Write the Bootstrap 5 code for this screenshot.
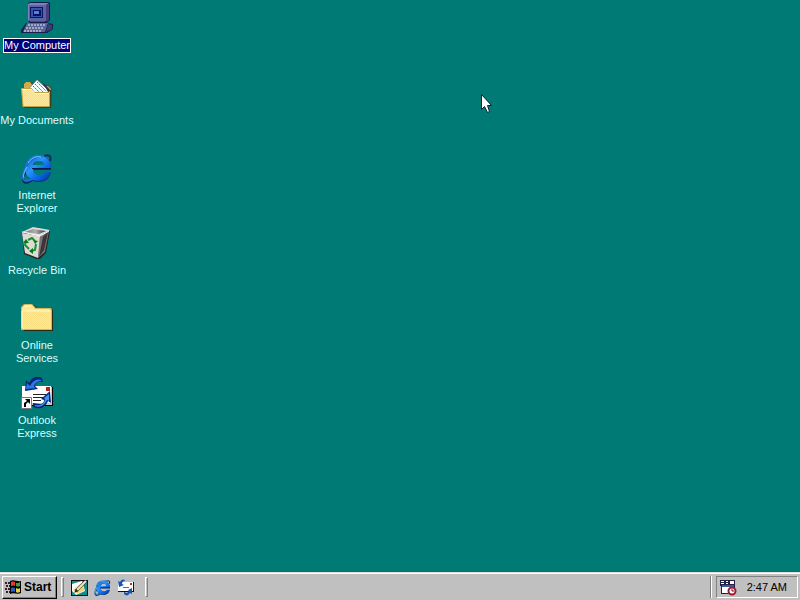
<!DOCTYPE html>
<html lang="en">
<head>
<meta charset="utf-8">
<meta name="viewport" content="width=device-width, initial-scale=1">
<title>Desktop</title>
<link href="https://cdn.jsdelivr.net/npm/bootstrap@5.3.0/dist/css/bootstrap.min.css" rel="stylesheet">
<style>
body { background: #007a75; font-family: "Liberation Sans", Arial, sans-serif; font-size: 11px; line-height: 13px; color: #000; }
svg { display: block; flex: none; }
.shortcut { width: 74px; height: 75px; padding-top: 2px; color: #d9ffff; gap: 5px; white-space: nowrap; }
.shortcut:hover { color: #fff; }
.shortcut.selected .caption-text { background: #000078; color: #fff; outline: 1px solid #fff; }
.taskbar { height: 28px; background: #c0c0c0; border-top: 1px solid #dfdfdf; box-shadow: inset 0 1px #fff; padding: 2px 2px 1px; }
.start-button { height: 23px; width: 55px; gap: 2px; padding: 0 2px; background: #c0c0c0; color: #000; font-size: 12px; font-weight: 700; border: 1px solid; border-color: #fff #000 #000 #fff; box-shadow: inset -1px -1px #808080; }
.grip { width: 3px; height: 20px; border: 1px solid; border-color: #fff #808080 #808080 #fff; }
.divider { width: 2px; height: 22px; border-left: 1px solid #808080; border-right: 1px solid #fff; }
.quick { width: 23px; height: 22px; background: none; }
.tray { width: 82px; height: 22px; border: 1px solid; border-color: #808080 #fff #fff #808080; padding: 0 10px 0 3px; }
.pointer { left: 481px; top: 94px; }
</style>
<script src="https://cdn.jsdelivr.net/npm/bootstrap@5.3.0/dist/js/bootstrap.bundle.min.js"></script>
</head>
<body class="d-flex flex-column min-vh-100 position-relative overflow-hidden">
<svg width="0" height="0" class="position-absolute" aria-hidden="true">
<defs>
<pattern id="dither" width="2" height="2" patternUnits="userSpaceOnUse"><rect width="2" height="2" fill="#f8dc80"/><path fill="#ffeaa0" d="M0 0h1v1H0zM1 1h1v1H1z"/></pattern>
<linearGradient id="blue" x1="0" y1="0" x2="1" y2="1"><stop stop-color="#0c54b8"/><stop offset=".4" stop-color="#2995fa"/><stop offset=".65" stop-color="#0869e8"/><stop offset="1" stop-color="#063098"/></linearGradient>
<linearGradient id="bin" x1="0" x2="1"><stop stop-color="#777"/><stop offset=".5" stop-color="#b5aead"/><stop offset="1" stop-color="#302e32"/></linearGradient>
<symbol id="e-logo" viewBox="0 0 32 32">
<path fill="none" stroke="#182858" stroke-width="2" d="M6 19C0 27 1 33 8 30l7-4M21 5c6-3 10-2 8 4"/>
<path fill="#102c70" fill-rule="evenodd" d="M18 4c8 0 13 6 12 14H12c1 4 4 6 7 6 2 0 4-1 5-3h6c-2 6-6 9-13 9C10 30 5 25 5 17S10 4 18 4zm-6 10h12c-1-4-3-5-6-5s-5 2-6 5z"/>
<path fill="url(#blue)" fill-rule="evenodd" d="M17 3c8 0 13 6 13 13H12c0 5 3 7 6 7 3 0 5-1 6-3h6c-2 6-6 9-13 9C9 29 4 23 4 16S9 3 17 3zm-5 10h11c0-3-2-4-5-4s-5 1-6 4z"/>
<path fill="none" stroke="#1970d8" stroke-width="2" d="M23 4c-7-2-17 6-20 15-3 9 0 12 8 8"/>
<path fill="none" stroke="#76c5ff" d="M7 11c4-6 9-7 13-6M6 15c-3 5-4 9-3 11"/><path stroke="#101848" d="M11 16.500h19"/>
</symbol>
<symbol id="mail" viewBox="0 0 32 32">
<path fill="#000" d="M3 10h29v19H3z"/><path fill="#fff" d="M1 9h29v18H1z"/><path fill="#c8c8c8" d="M2 26h28V10h1v18H2z"/>
<path stroke="#222" d="M12 17.500h13M12 20.500h13M12 23.500h8"/><path fill="#b82118" d="M25 10h4v4h-4z"/>
<path fill="#08247a" d="M4 14l1-11 3 3c3-6 9-8 13-5l1 4c-4-1-7 0-8 4l3 3z"/><path fill="#2878e8" d="M5 12l1-6 3 3c3-6 8-8 12-5-5 0-8 3-8 6l2 1z"/>
<path fill="#08247a" d="M12 26l7 1c3 0 4-2 4-4l-3-1 9-8 1 12-3-2c-3 7-9 9-15 6z"/><path fill="#4293ee" d="M14 28c6 1 9-1 10-6l-1-1 5-4v7l-2-1c-3 6-7 8-12 6z"/>
</symbol>
</defs>
</svg>

<main class="flex-grow-1">
<nav class="d-flex flex-column" aria-label="Desktop shortcuts">
<a href="#" class="shortcut selected d-flex flex-column align-items-center text-center text-decoration-none">
<svg width="32" height="32" viewBox="0 0 32 32" aria-hidden="true">
<path fill="#151c50" d="M7 1L9 0h19l1 1v17l-3 3H9l-2-2z"/><path fill="#5964a0" d="M7 2h18v17H7z"/><path fill="#7b83b7" d="M7 2l2-1h19l-3 2H8v15H7z"/><path fill="#0a1764" d="M9 5h13v11H9z"/><path fill="#3652ab" d="M10 6h11v9H10z"/><path fill="#07135c" d="M12 8h8v6h-8z"/><path fill="#607be0" d="M13 9h5v3h-5z"/><path fill="#4a3b80" d="M25 3l3-2v17l-3 2z"/>
<path fill="#17214d" d="M5 21h21l6 1v5l-6 4H0v-3z"/><path fill="#59669b" d="M6 21h21l-3 9H2z"/><path fill="#3c3f70" d="M27 22l4 1v4l-6 3z"/><path stroke="#aaa7bd" stroke-width="2" stroke-dasharray="2 1" d="M7 23h18M5 26h18M3 29h18"/><path fill="#738" d="M9 19h15v1H9z"/>
</svg>
<span class="caption-text">My Computer</span></a>

<a href="#" class="shortcut d-flex flex-column align-items-center text-center text-decoration-none">
<svg width="32" height="32" viewBox="0 0 32 32" aria-hidden="true">
<path fill="#594c1b" d="M2 12l2-7h6l4 3h14l3 4v18H3l-2-2z"/><path fill="#cfad4b" d="M3 7l2-2h4l3 4h15l3 3v15H3z"/><path fill="#fff" stroke="#555" d="M7 13l9-10 14 12-4 6z"/><path fill="#efffff" d="M8 12l8-9 12 12-4 6z"/><path stroke="#3477a1" stroke-dasharray="2 1" d="M14 7l11 11M16 5l9 9M12 9l8 8"/><path fill="#303050" d="M21 4l9 10-3 1z"/>
<path fill="url(#dither)" stroke="#c4a344" d="M.5 11.500h10l3 4h15v14H2z"/><path fill="none" stroke="#fff8c4" d="M1.500 12.500h9l3 4h14"/><path fill="#40401c" d="M3 30h26V13h1v18H4z"/>
</svg>
<span class="caption-text">My Documents</span></a>

<a href="#" class="shortcut d-flex flex-column align-items-center text-center text-decoration-none">
<svg width="32" height="32" aria-hidden="true"><use href="#e-logo"/></svg>
<span class="caption-text">Internet<br>Explorer</span></a>

<a href="#" class="shortcut d-flex flex-column align-items-center text-center text-decoration-none">
<svg width="32" height="32" viewBox="0 0 32 32" aria-hidden="true">
<path fill="#242427" d="M1 6L12 0l17 4-4 22-7 7-15-6z"/><path fill="#ddd" d="M1 5l11-5 17 3-10 6z"/><path fill="url(#bin)" d="M4 5l8-3 13 2-7 3z"/><path fill="#777074" d="M19 9l9-5-4 21-7 6z"/><path fill="#393638" d="M22 10l5-5-4 18-5 7z"/><path fill="#dedbd5" d="M1 6l18 3-2 22-13-5z"/><path fill="none" stroke="#fff" d="M1 5l18 4 9-5"/>
<g fill="none" stroke="#13942a" stroke-width="2"><path d="M7 13l4-2 3 3M15 17l-1 6-4 1M8 22l-4-4 1-4"/></g><path fill="#087a1c" d="M12 13l5 1-3 3zM12 21v6l-4-3zM2 16l3-4 3 4z"/>
</svg>
<span class="caption-text">Recycle Bin</span></a>

<a href="#" class="shortcut d-flex flex-column align-items-center text-center text-decoration-none">
<svg width="32" height="32" viewBox="0 0 32 32" aria-hidden="true">
<path fill="#292a16" d="M2 5l3-2h8l4 4h14l1 2v20H3z"/><path fill="#d6b75a" d="M0 5l3-3h8l4 4h15l1 2v20H0z"/><path fill="url(#dither)" d="M1 9h29v18H1z"/><path fill="#ffe792" d="M1 6l3-3h7l3 4h15v2H1z"/><path fill="none" stroke="#fff8c8" d="M1 26V9h29M2 6l2-2h6"/>
</svg>
<span class="caption-text">Online<br>Services</span></a>

<a href="#" class="shortcut d-flex flex-column align-items-center text-center text-decoration-none">
<svg width="32" height="32" viewBox="0 0 32 32" aria-hidden="true"><use href="#mail"/><path fill="#fff" stroke="#777" d="M.5 20.500h10v11H.5z"/><path fill="#000" d="M4 22h5v5l-2-2-2 2v3H3v-4l3-2z"/></svg>
<span class="caption-text">Outlook<br>Express</span></a>
</nav>
</main>

<svg class="pointer position-absolute" width="12" height="20" viewBox="0 0 12 20" aria-hidden="true"><path fill="#fff" stroke="#102030" d="M.5.5v15l3-3 3 6 2-1-2-6h4z"/></svg>

<footer class="taskbar d-flex align-items-center">
<button type="button" class="start-button d-flex align-items-center">
<svg width="17" height="16" viewBox="0 0 17 16" aria-hidden="true"><path fill="#000" d="M5 2c4-2 7 1 11 0v12c-4 2-7-1-11 1z"/><path fill="#e73c25" d="M6 3c2-1 3 0 4 0v4c-2-1-3 0-4 0z"/><path fill="#35a344" d="M11 4c2 0 3 0 4-1v4c-2 1-3 1-4 0z"/><path fill="#295dc9" d="M6 9c2-1 3 0 4 0v4c-2-1-3 0-4 0z"/><path fill="#f2ce35" d="M11 9c2 1 3 1 4 0v4c-2 1-3 1-4 0z"/><path stroke="#401c30" stroke-width="2" stroke-dasharray="2 1" d="M0 4h5M1 7h4M0 10h5M1 13h4"/></svg>
<span>Start</span></button>
<span class="grip ms-1"></span>
<div class="d-flex ms-1" role="group" aria-label="Quick launch">
<button type="button" class="quick border-0 p-0 d-flex align-items-center justify-content-center" aria-label="Show desktop"><svg width="17" height="17" viewBox="0 0 17 17" aria-hidden="true"><path fill="#111" d="M0 1h17v16H0z"/><path fill="#168b8b" d="M1 2h15v14H1z"/><path fill="#fff" d="M1 5l10-3 3 10-9 4-4-4z"/><path fill="#eed571" d="M2 11l8-7 4 7-8 4z"/><path stroke="#222" stroke-width="3" d="M5 12L15 2"/><path stroke="#f8edbd" stroke-width="2" d="M6 11l9-9"/><path fill="#222" d="M3 14l2-4 2 2z"/></svg></button>
<button type="button" class="quick border-0 p-0 d-flex align-items-center justify-content-center" aria-label="Internet Explorer"><svg width="17" height="17" aria-hidden="true"><use href="#e-logo"/></svg></button>
<button type="button" class="quick border-0 p-0 d-flex align-items-center justify-content-center" aria-label="Outlook Express"><svg width="17" height="17" viewBox="0 0 17 17" aria-hidden="true"><path fill="#111" d="M1 3h16v10H1z"/><path fill="#fff" d="M1 3h15v9H1z"/><path fill="#b53328" d="M13 4h2v2h-2z"/><path stroke="#667" d="M6 8.500h6"/><path fill="#1554b0" d="M1 2l2 1c2-3 4-3 5-1-2 0-3 1-3 3l2 1-5 2zM7 13l3 1 2-2-1-1 4-2v6l-2-1c-2 3-4 3-6 1z"/></svg></button>
</div>
<span class="grip ms-2"></span>
<div class="d-flex align-items-center ms-auto gap-1">
<span class="divider"></span>
<div class="tray d-flex align-items-center justify-content-between">
<svg width="17" height="17" viewBox="0 0 17 17" aria-hidden="true"><path fill="#202040" d="M0 1h15v14H1V7H0z"/><path fill="#fff" d="M2 7h11v7H2z"/><path fill="#fff" d="M1 2h3v1H1zM1 4h3v1H1zM6 2h2v1H6zM6 4h2v1H6zM10 2h4v3h-4z"/><path fill="#345bad" d="M2 6h12v2H2z"/><circle cx="12" cy="12" r="3.500" fill="#fff" stroke="#a51730" stroke-width="2"/><path fill="none" stroke="#601020" d="M12 10v2h2"/></svg>
<time datetime="02:47">2:47 AM</time>
</div>
</div>
</footer>
</body>
</html>
